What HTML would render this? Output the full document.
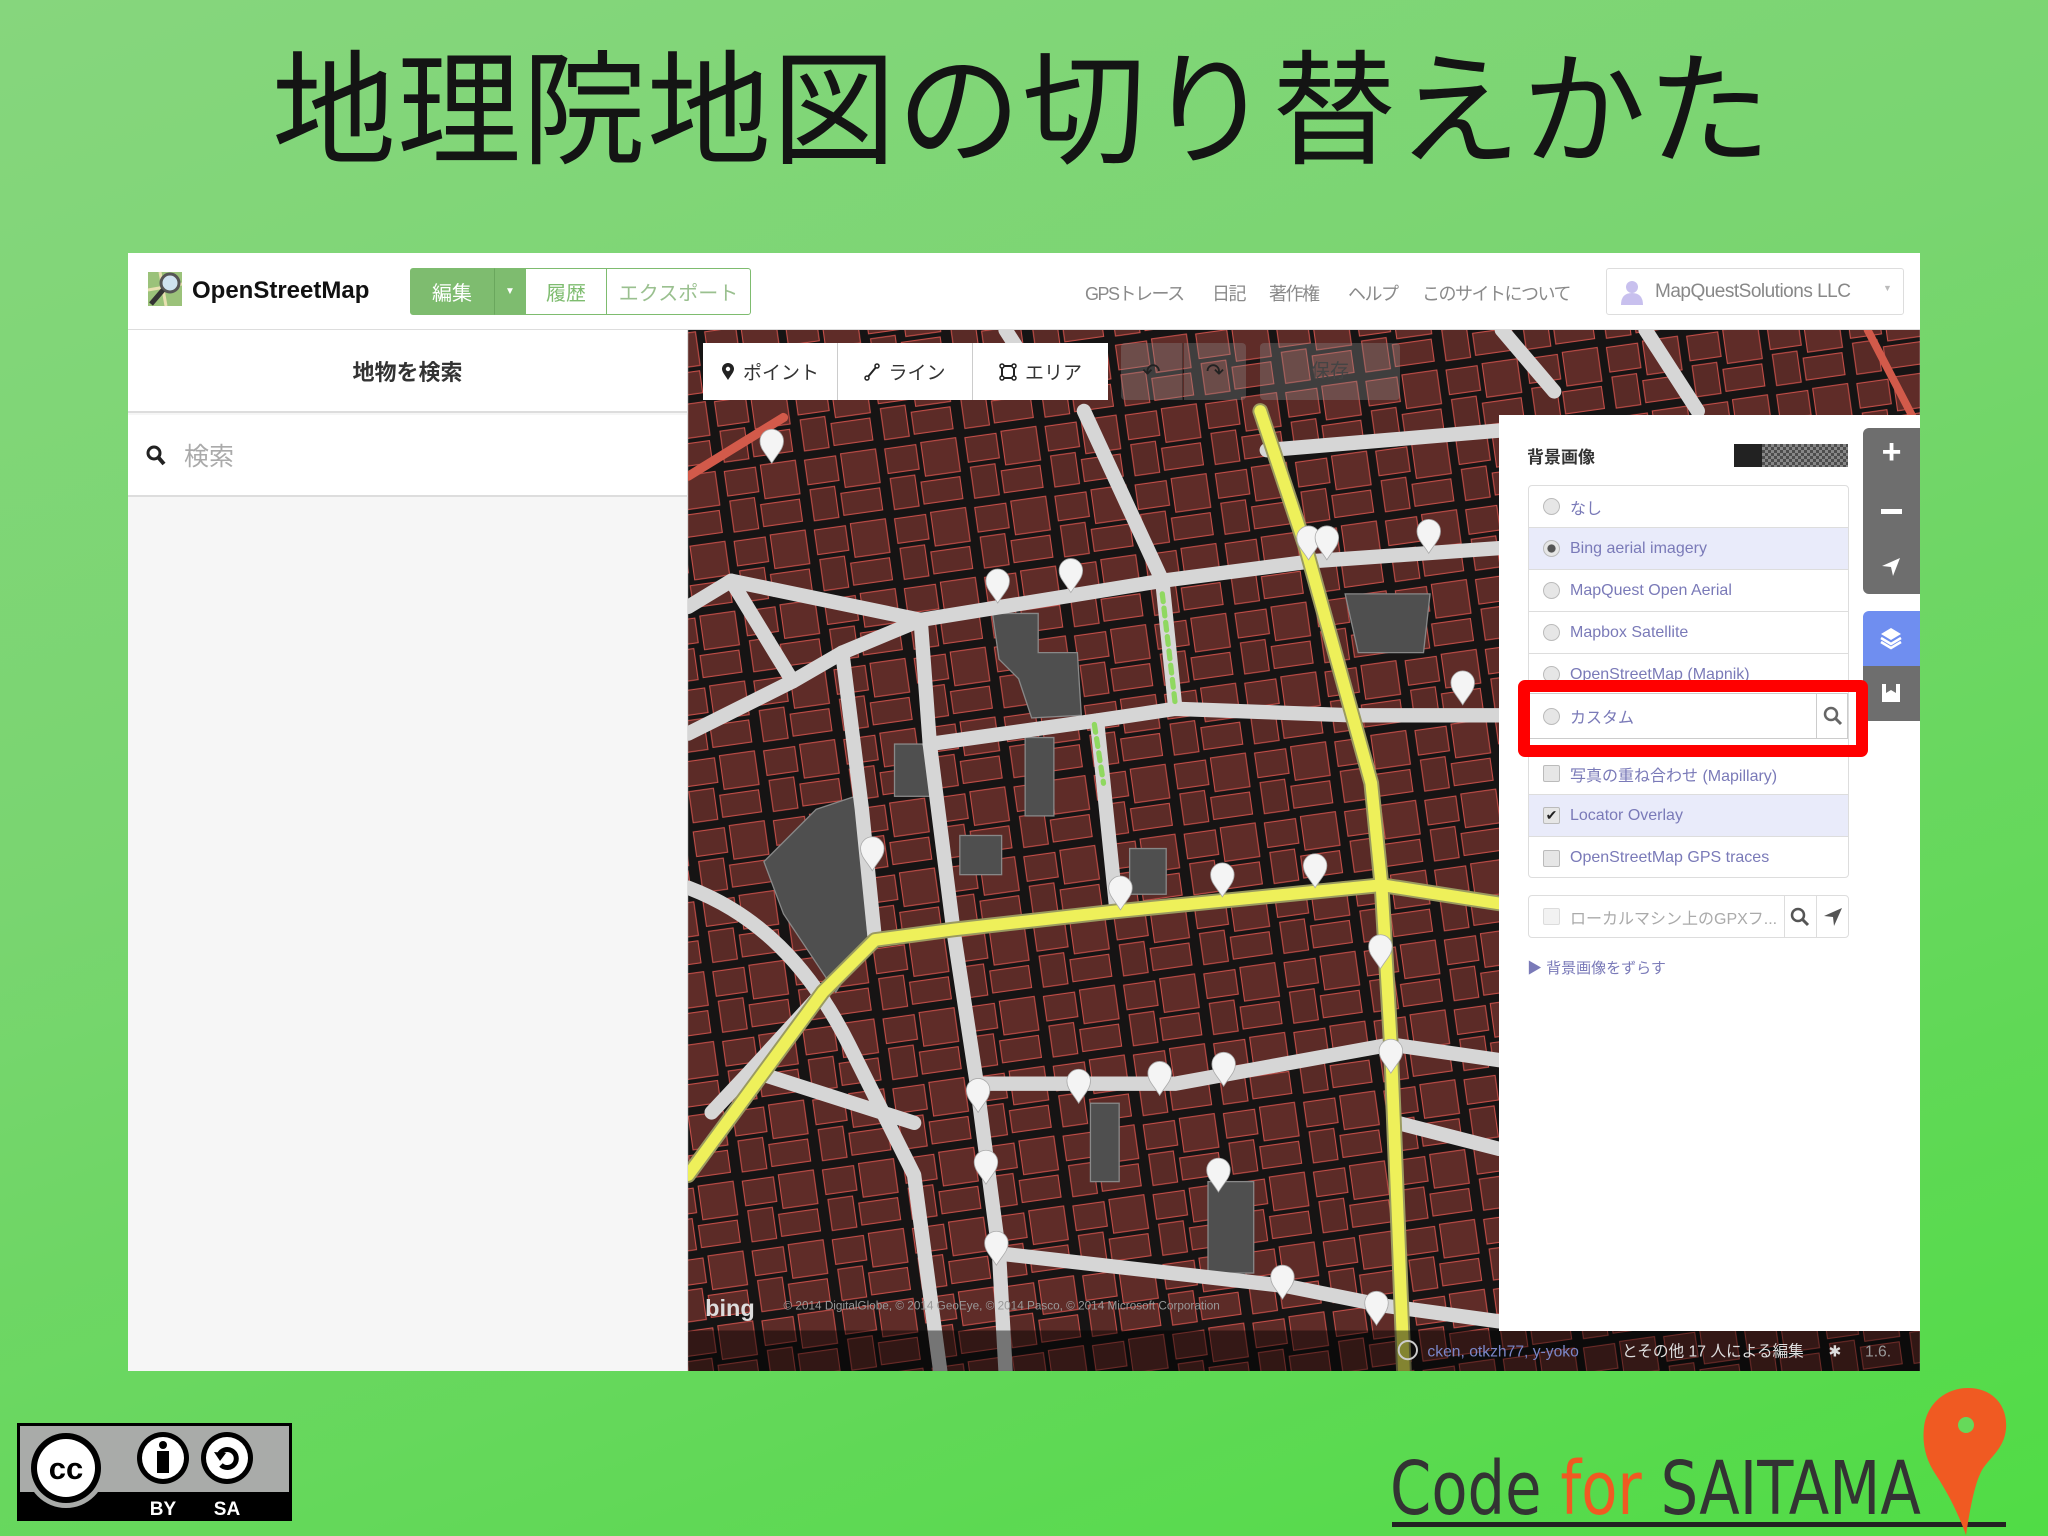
<!DOCTYPE html>
<html><head><meta charset="utf-8">
<style>
*{margin:0;padding:0;box-sizing:border-box}
body{width:2048px;height:1536px;overflow:hidden;position:relative;font-family:"Liberation Sans","Noto Sans CJK JP",sans-serif;
background:linear-gradient(160deg,#86d67d 0%,#79d570 40%,#62d858 75%,#50dc45 100%);}
.abs{position:absolute}
#title{left:272px;top:50px;font-size:124px;line-height:124px;color:#141414;white-space:nowrap;letter-spacing:1px}
#shot{left:128px;top:253px;width:1792px;height:1118px;background:#fff;overflow:hidden}
.hdr{left:0;top:0;width:1792px;height:77px;background:#fff;border-bottom:1px solid #ddd}
.btn{position:absolute;top:15px;height:47px;border:1px solid #7ebc6f;font-size:20px;color:#7ebc6f;display:flex;align-items:center;justify-content:center;background:#fff}
.nav{position:absolute;top:27px;font-size:18px;color:#8a8a8a;white-space:nowrap;letter-spacing:-1.5px}
.tb{position:absolute;top:90px;height:57px;background:#fff;display:flex;align-items:center;justify-content:center;font-size:19px;color:#333;border-right:1px solid #ccc}
.row{position:absolute;left:0;width:320px;height:42px;border-bottom:1px solid #ddd;display:flex;align-items:center;font-size:16px;color:#7a7ab8;padding-left:14px;white-space:nowrap}
.rad{width:17px;height:17px;border-radius:50%;border:1px solid #bbb;background:#e6e6e6;margin-right:10px;flex:none}
.chk{width:17px;height:17px;border-radius:2px;border:1px solid #bbb;background:#e6e6e6;margin-right:10px;flex:none}
</style></head><body>
<div id="title" class="abs">地理院地図の切り替えかた</div>

<div id="shot" class="abs">
 <svg class="abs" style="left:560px;top:77px" width="1232" height="1041" viewBox="527 253 943 797">
  <defs>
   <pattern id="bld" width="62" height="54" patternUnits="userSpaceOnUse" patternTransform="rotate(-8)">
    <rect width="62" height="54" fill="#161414"/>
    <rect x="3" y="3" width="24" height="19" fill="#5c2b27" stroke="#c9504a" stroke-width="0.8"/>
    <rect x="31" y="2" width="27" height="26" fill="#5f2c28" stroke="#c9504a" stroke-width="0.8"/>
    <rect x="4" y="26" width="19" height="24" fill="#592a26" stroke="#c9504a" stroke-width="0.8"/>
    <rect x="27" y="32" width="30" height="17" fill="#5c2b27" stroke="#c9504a" stroke-width="0.8"/>
   </pattern>
  </defs>
  <rect x="527" y="253" width="943" height="797" fill="url(#bld)"/>
  <g fill="#4f4f4f" stroke="#888" stroke-width="1">
   <polygon points="585,660 625,620 655,610 665,720 640,760 600,700"/>
   <polygon points="760,470 795,470 795,500 825,500 828,548 790,550 780,520 765,505"/>
   <polygon points="1030,455 1095,455 1090,500 1040,500"/>
   <rect x="685" y="570" width="30" height="40"/>
   <rect x="735" y="640" width="32" height="30"/>
   <rect x="865" y="650" width="28" height="35"/>
   <rect x="835" y="845" width="22" height="60"/>
   <rect x="925" y="905" width="35" height="70"/>
   <rect x="785" y="565" width="22" height="60"/>
  </g>
  <g fill="none" stroke-linecap="round" stroke-linejoin="round">
   <g stroke="#d6d6d6" stroke-width="11">
    <path d="M527,465 L560,445 L705,475 L890,445 L1005,430 L1148,420"/>
    <path d="M560,445 L607,522 L527,562"/>
    <path d="M607,522 L645,500 L705,475"/>
    <path d="M645,500 L660,620 L670,720"/>
    <path d="M705,475 L712,570 L730,712 L748,830 L765,960 L770,1050"/>
    <path d="M712,570 L840,552 L900,543 L1035,548 L1148,548"/>
    <path d="M890,445 L900,543"/><path d="M840,552 L855,698"/>
    <path d="M748,830 L900,830 L1065,800 L1148,812"/>
    <path d="M765,960 L985,985 L1060,1000 L1148,1012"/>
    <path d="M830,315 L890,445"/><path d="M970,345 L1148,330"/>
    <path d="M527,680 C580,700 620,740 650,800 L700,900 L720,1050"/>
    <path d="M575,820 L700,860"/>
    <path d="M630,760 L575,820 L545,852"/>
    <path d="M770,253 L800,300"/><path d="M1150,253 L1190,300"/>
    <path d="M1260,253 L1300,315"/>
    <path d="M1070,860 L1148,880"/>
   </g>
   <g stroke="#9a9a60" stroke-width="12">
    <path d="M965,315 L1000,420 L1050,600 L1058,680 L1065,800 L1075,1050"/>
    <path d="M527,900 L630,760 L670,720 L730,712 L855,698 L1058,678 L1148,692"/>
   </g>
   <g stroke="#eef05a" stroke-width="9">
    <path d="M965,315 L1000,420 L1050,600 L1058,680 L1065,800 L1075,1050"/>
    <path d="M527,900 L630,760 L670,720 L730,712 L855,698 L1058,678 L1148,692"/>
   </g>
   <path d="M527,365 L600,320" stroke="#d25a4a" stroke-width="7"/>
   <path d="M1430,253 L1470,330" stroke="#d25a4a" stroke-width="6"/>
   <path d="M890,455 L900,540 M838,555 L845,600" stroke="#8fd860" stroke-width="4" stroke-dasharray="6 5"/>
  </g>
  <g fill="#f4f4f4" stroke="#aaa" stroke-width="0.6">
   <path id="pin" d="M0,0 C-5,-8 -9,-11 -9,-17 A9,9 0 1 1 9,-17 C9,-11 5,-8 0,0Z" transform="translate(764,462)"/>
   <use href="#pin" transform="translate(56,-8)"/><use href="#pin" transform="translate(238,-33)"/><use href="#pin" transform="translate(252,-33)"/><use href="#pin" transform="translate(330,-38)"/><use href="#pin" transform="translate(356,78)"/><use href="#pin" transform="translate(-96,205)"/><use href="#pin" transform="translate(94,235)"/><use href="#pin" transform="translate(172,225)"/><use href="#pin" transform="translate(243,218)"/><use href="#pin" transform="translate(293,280)"/><use href="#pin" transform="translate(301,360)"/><use href="#pin" transform="translate(-15,390)"/><use href="#pin" transform="translate(62,383)"/><use href="#pin" transform="translate(124,377)"/><use href="#pin" transform="translate(173,370)"/><use href="#pin" transform="translate(-9,445)"/><use href="#pin" transform="translate(-1,507)"/><use href="#pin" transform="translate(218,533)"/><use href="#pin" transform="translate(290,553)"/><use href="#pin" transform="translate(-173,-107)"/><use href="#pin" transform="translate(169,451)"/>
  </g>
  <rect x="527" y="1019" width="943" height="31" fill="#000" opacity="0.45"/>
  <text x="540" y="1008" fill="#ddd" font-size="18" font-weight="bold" font-family="Liberation Sans">bing</text>
  <text x="600" y="1003" fill="#999" font-size="9" font-family="Liberation Sans">© 2014 DigitalGlobe, © 2014 GeoEye, © 2014 Pasco, © 2014 Microsoft Corporation</text>
  <text x="1093" y="1039" fill="#7a86c8" font-size="12" font-family="Liberation Sans,Noto Sans CJK JP">cken, otkzh77, y-yoko</text>
  <text x="1242" y="1039" fill="#ddd" font-size="12" font-family="Liberation Sans,Noto Sans CJK JP">とその他 17 人による編集</text>
  <text x="1400" y="1039" fill="#ddd" font-size="12">✱</text>
  <text x="1428" y="1039" fill="#999" font-size="12" font-family="Liberation Sans">1.6.</text>
  <circle cx="1078" cy="1034" r="7" fill="none" stroke="#ccc" stroke-width="1.5"/>
 </svg>

 <div class="abs hdr">
  <svg class="abs" style="left:18px;top:17px" width="40" height="40" viewBox="0 0 40 40">
   <rect x="2" y="2" width="34" height="34" fill="#9bc27a"/><path d="M2,20 L36,14 M14,2 L20,36" stroke="#e8e0b0" stroke-width="3"/>
   <circle cx="24" cy="13" r="9" fill="#cfe3f0" stroke="#555" stroke-width="3"/><path d="M17,20 L5,34" stroke="#333" stroke-width="5"/>
  </svg>
  <div class="abs" style="left:64px;top:24px;font-size:24px;font-weight:bold;color:#111">OpenStreetMap</div>
  <div class="btn" style="left:282px;width:84px;background:#7ebc6f;color:#fff;border-radius:3px 0 0 3px">編集</div>
  <div class="btn" style="left:366px;width:32px;background:#7ebc6f;color:#fff;font-size:10px;border-left:1px solid #6aa75d">▼</div>
  <div class="btn" style="left:397px;width:82px">履歴</div>
  <div class="btn" style="left:478px;width:145px;color:#9ac08f;border-radius:0 3px 3px 0">エクスポート</div>
  <div class="nav" style="left:957px">GPSトレース</div>
  <div class="nav" style="left:1084px">日記</div>
  <div class="nav" style="left:1141px">著作権</div>
  <div class="nav" style="left:1220px">ヘルプ</div>
  <div class="nav" style="left:1294px">このサイトについて</div>
  <div class="abs" style="left:1478px;top:15px;width:298px;height:47px;border:1px solid #ddd;border-radius:3px;background:#fff">
   <svg class="abs" style="left:12px;top:10px" width="26" height="26"><circle cx="13" cy="8" r="6" fill="#c8c0ee"/><path d="M2,26 Q2,14 13,14 Q24,14 24,26Z" fill="#c8c0ee"/></svg>
   <div class="abs" style="left:48px;top:12px;font-size:19px;color:#888;white-space:nowrap;letter-spacing:-0.5px">MapQuestSolutions LLC</div>
   <div class="abs" style="left:276px;top:14px;font-size:9px;color:#bbb">▼</div>
  </div>
 </div>

 <div class="abs" style="left:0;top:77px;width:560px;height:1041px;background:#f6f6f6;border-right:1px solid #ddd">
  <div class="abs" style="left:0;top:0;width:559px;height:83px;background:#fff;border-bottom:2px solid #ddd"></div>
  <div class="abs" style="left:0;top:25px;width:559px;text-align:center;font-size:22px;font-weight:bold;color:#333">地物を検索</div>
  <div class="abs" style="left:0;top:85px;width:559px;height:82px;background:#fff;border-bottom:2px solid #ddd"></div>
  <svg class="abs" style="left:17px;top:114px" width="22" height="24"><circle cx="9" cy="9" r="6" fill="none" stroke="#222" stroke-width="3"/><path d="M13,13 L19,20" stroke="#222" stroke-width="4"/></svg>
  <div class="abs" style="left:56px;top:107px;font-size:25px;color:#aaa">検索</div>
 </div>

 <div class="abs" style="left:575px;top:90px;width:405px;height:57px;background:#fff;border-radius:4px"></div>
 <div class="tb" style="left:575px;width:135px">
  <svg width="14" height="18" style="margin-right:8px"><path d="M7,17 C4,12 1,9 1,6 A6,6 0 1 1 13,6 C13,9 10,12 7,17Z" fill="#222"/><circle cx="7" cy="6" r="2.2" fill="#fff"/></svg>ポイント</div>
 <div class="tb" style="left:710px;width:135px">
  <svg width="16" height="18" style="margin-right:8px"><path d="M3,15 L13,3" stroke="#222" stroke-width="2"/><circle cx="3" cy="15" r="2" fill="#fff" stroke="#222" stroke-width="1.5"/><circle cx="13" cy="3" r="2" fill="#fff" stroke="#222" stroke-width="1.5"/></svg>ライン</div>
 <div class="tb" style="left:845px;width:135px;border:none">
  <svg width="18" height="18" style="margin-right:8px"><rect x="3" y="3" width="12" height="12" fill="none" stroke="#222" stroke-width="2"/><g fill="#fff" stroke="#222" stroke-width="1.5"><circle cx="3" cy="3" r="2"/><circle cx="15" cy="3" r="2"/><circle cx="3" cy="15" r="2"/><circle cx="15" cy="15" r="2"/></g></svg>エリア</div>
 <div class="abs" style="left:993px;top:90px;width:62px;height:57px;background:rgba(140,140,140,0.35);border-radius:4px 0 0 4px;color:#222;font-size:22px;text-align:center;line-height:57px;border-right:1px solid rgba(0,0,0,.3)">↶</div>
 <div class="abs" style="left:1056px;top:90px;width:62px;height:57px;background:rgba(140,140,140,0.35);border-radius:0 4px 4px 0;color:#222;font-size:22px;text-align:center;line-height:57px">↷</div>
 <div class="abs" style="left:1132px;top:90px;width:140px;height:57px;background:rgba(140,140,140,0.35);border-radius:4px;color:#444;font-size:19px;text-align:center;line-height:57px">保存</div>

 <div class="abs" style="left:1371px;top:162px;width:421px;height:916px;background:#fff">
  <div class="abs" style="left:28px;top:28px;font-size:17px;font-weight:bold;color:#333">背景画像</div>
  <div class="abs" style="left:235px;top:29px;width:114px;height:23px;background:#222"></div>
  <div class="abs" style="left:263px;top:29px;width:86px;height:23px;background-image:linear-gradient(45deg,#999 25%,transparent 25%,transparent 75%,#999 75%),linear-gradient(45deg,#999 25%,#555 25%,#555 75%,#999 75%);background-size:6px 6px;background-position:0 0,3px 3px;opacity:.85"></div>
  <div class="abs" style="left:29px;top:70px;width:321px;height:393px;border:1px solid #ddd;border-radius:4px;overflow:hidden">
   <div class="row" style="top:0"><span class="rad"></span>なし</div>
   <div class="row" style="top:42px;background:#e9ebfa"><span class="rad" style="background:radial-gradient(#555 35%,#e6e6e6 42%)"></span>Bing aerial imagery</div>
   <div class="row" style="top:84px"><span class="rad"></span>MapQuest Open Aerial</div>
   <div class="row" style="top:126px"><span class="rad"></span>Mapbox Satellite</div>
   <div class="row" style="top:168px"><span class="rad"></span>OpenStreetMap (Mapnik)</div>
   <div class="row" style="top:267px"><span class="chk"></span>写真の重ね合わせ (Mapillary)</div>
   <div class="row" style="top:309px;background:#e9ebfa"><span class="chk" style="text-align:center;font-size:14px;line-height:15px;color:#222">✔</span>Locator Overlay</div>
   <div class="row" style="top:351px;border:none"><span class="chk"></span>OpenStreetMap GPS traces</div>
  </div>
  <div class="abs" style="left:29px;top:480px;width:321px;height:43px;border:1px solid #ddd;border-radius:4px;display:flex;align-items:center;padding-left:14px;font-size:16px;color:#aaa;white-space:nowrap;overflow:hidden"><span class="chk" style="opacity:.5"></span>ローカルマシン上のGPXフ...</div>
  <div class="abs" style="left:285px;top:481px;width:64px;height:41px;background:#fff;border-left:1px solid #ddd;border-radius:0 4px 4px 0"></div>
  <div class="abs" style="left:317px;top:481px;width:1px;height:41px;background:#ddd"></div>
  <svg class="abs" style="left:290px;top:491px" width="22" height="22"><circle cx="9" cy="9" r="6" fill="none" stroke="#555" stroke-width="2.5"/><path d="M13,13 L19,19" stroke="#555" stroke-width="3"/></svg>
  <svg class="abs" style="left:323px;top:491px" width="22" height="22"><path d="M2,10 L20,2 L12,20 L11,11Z" fill="#555"/></svg>
  <div class="abs" style="left:28px;top:542px;font-size:15px;color:#7a7ab8">▶ 背景画像をずらす</div>
 </div>
 <div class="abs" style="left:1400px;top:440px;width:320px;height:46px;background:#fff;border:1px solid #ccc;display:flex;align-items:center;padding-left:14px;font-size:16px;color:#7a7ab8"><span class="rad"></span>カスタム</div>
 <div class="abs" style="left:1688px;top:440px;width:1px;height:46px;background:#ccc"></div>
 <svg class="abs" style="left:1694px;top:452px" width="22" height="22"><circle cx="9" cy="9" r="6" fill="none" stroke="#666" stroke-width="2.5"/><path d="M13,13 L19,19" stroke="#666" stroke-width="3"/></svg>

 <div class="abs" style="left:1735px;top:175px;width:57px;height:166px;background:#6e6e6e;border-radius:6px 0 0 6px"></div>
 <div class="abs" style="left:1735px;top:180px;width:57px;text-align:center;color:#fff;font-size:34px;font-weight:bold">+</div>
 <div class="abs" style="left:1753px;top:256px;width:21px;height:5px;background:#fff"></div>
 <svg class="abs" style="left:1752px;top:303px" width="22" height="22"><path d="M2,10 L20,2 L13,20 L11,11Z" fill="#fff"/></svg>
 <div class="abs" style="left:1735px;top:358px;width:57px;height:55px;background:#6f8ef0;border-radius:6px 0 0 0"></div>
 <svg class="abs" style="left:1751px;top:373px" width="24" height="24"><path d="M12,2 L22,8 L12,14 L2,8Z" fill="#fff"/><path d="M2,12 L12,18 L22,12 M2,16 L12,22 L22,16" fill="none" stroke="#fff" stroke-width="2.5"/></svg>
 <div class="abs" style="left:1735px;top:413px;width:57px;height:55px;background:#6e6e6e;border-radius:0 0 0 6px"></div>
 <svg class="abs" style="left:1753px;top:430px" width="20" height="20"><rect x="1" y="1" width="18" height="18" fill="#fff"/><path d="M5,1 L5,10 L10,7 L15,10 L15,1" fill="#6e6e6e"/></svg>
</div>

<div class="abs" style="left:1518px;top:680px;width:350px;height:77px;border:12px solid #f00;border-radius:7px"></div>

<svg class="abs" style="left:17px;top:1423px" width="275" height="98" viewBox="0 0 275 98">
 <rect x="0" y="0" width="275" height="98" fill="#000"/>
 <rect x="3" y="3" width="269" height="66" fill="#a9aba9"/>
 <circle cx="49" cy="45" r="40" fill="#a9aba9"/>
 <circle cx="49" cy="45" r="35" fill="#000"/>
 <circle cx="49" cy="45" r="29" fill="#fff"/>
 <text x="49" y="56" text-anchor="middle" font-family="Liberation Sans" font-weight="bold" font-size="31" fill="#000">cc</text>
 <circle cx="146" cy="35" r="26" fill="#000"/><circle cx="146" cy="35" r="21" fill="#fff"/>
 <circle cx="146" cy="22" r="4" fill="#000"/><rect x="140" y="28" width="12" height="22" fill="#000"/>
 <circle cx="210" cy="35" r="26" fill="#000"/><circle cx="210" cy="35" r="21" fill="#fff"/>
 <path d="M202,32 A9,9 0 1 1 204,42" fill="none" stroke="#000" stroke-width="5"/>
 <path d="M197,29 L203,38 L209,30Z" fill="#000"/>
 <text x="146" y="92" text-anchor="middle" font-family="Liberation Sans" font-weight="bold" font-size="19" fill="#fff">BY</text>
 <text x="210" y="92" text-anchor="middle" font-family="Liberation Sans" font-weight="bold" font-size="19" fill="#fff">SA</text>
</svg>

<div class="abs" style="left:1390px;top:1452px;font-family:'DejaVu Sans','Liberation Sans',sans-serif;font-size:74px;line-height:74px;color:#333;white-space:nowrap;transform:scaleX(0.8);transform-origin:left top">Code <span style="color:#f05a22">for</span> SAITAMA</div>
<div class="abs" style="left:1392px;top:1522px;width:614px;height:5px;background:#222"></div>
<svg class="abs" style="left:1918px;top:1385px" width="95" height="151" viewBox="0 0 95 151">
 <path d="M50,3 C74,3 90,20 88,44 C86,64 72,72 64,85 C56,100 52,125 48,150 C40,128 30,108 18,90 C8,75 4,60 6,42 C9,18 28,3 50,3Z" fill="#f05a22"/>
 <circle cx="48" cy="40" r="8" fill="#66d95a"/>
</svg>
</body></html>
